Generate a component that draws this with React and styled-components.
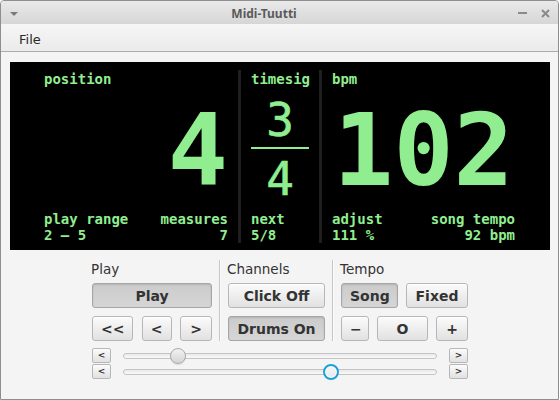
import React from "react";
import styled, { createGlobalStyle } from "styled-components";

const GREEN = "#90ee90";
const MONO = `"DejaVu Sans Mono", "Liberation Mono", monospace`;
const SANS = `"DejaVu Sans", "Liberation Sans", sans-serif`;

const GlobalStyle = createGlobalStyle`
  html, body {
    margin: 0;
    padding: 0;
    background: #ffffff;
  }
  * {
    box-sizing: border-box;
  }
`;

const App = () => {
  return (
    <>
      <GlobalStyle />
      <Window>
        <TitleBar>
          <TitleMenuArrow />
          <Title>Midi-Tuutti</Title>
          <TitleButtons>
            <Minimize />
            <svg width="9" height="9" viewBox="0 0 9 9">
              <path d="M1 1 L8 8 M8 1 L1 8" stroke="#8a8a8a" strokeWidth="2" />
            </svg>
          </TitleButtons>
        </TitleBar>

        <MenuBar>
          <MenuItem>File</MenuItem>
        </MenuBar>

        <Content>
          {/* 검은 디스플레이 패널 */}
          <Display>
            <Column $w={184}>
              <TopLabel>position</TopLabel>
              <BigNumber $align="flex-end">4</BigNumber>
              <Footer>
                <FooterCell>
                  <span>play range</span>
                  <span>2 — 5</span>
                </FooterCell>
                <FooterCell $right>
                  <span>measures</span>
                  <span>7</span>
                </FooterCell>
              </Footer>
            </Column>
            <PanelSep />
            <Column $w={58}>
              <TopLabel>timesig</TopLabel>
              <Fraction>
                <FracNum>3</FracNum>
                <FracBar />
                <FracNum>4</FracNum>
              </Fraction>
              <Footer>
                <FooterCell>
                  <span>next</span>
                  <span>5/8</span>
                </FooterCell>
              </Footer>
            </Column>
            <PanelSep />
            <Column $grow>
              <TopLabel>bpm</TopLabel>
              <BigNumber $align="center">102</BigNumber>
              <Footer>
                <FooterCell>
                  <span>adjust</span>
                  <span>111 %</span>
                </FooterCell>
                <FooterCell $right>
                  <span>song tempo</span>
                  <span>92 bpm</span>
                </FooterCell>
              </Footer>
            </Column>
          </Display>

          {/* 아래 컨트롤 */}
          <Controls>
            <SectionRow>
              <Section $w={120}>
                <GroupLabel>Play</GroupLabel>
                <Button $pressed>Play</Button>
                <NavRow>
                  <Button>&lt;&lt;</Button>
                  <Button>&lt;</Button>
                  <Button>&gt;</Button>
                </NavRow>
              </Section>
              <Divider />
              <Section $w={97}>
                <GroupLabel>Channels</GroupLabel>
                <Button>Click Off</Button>
                <Button $pressed>Drums On</Button>
              </Section>
              <Divider />
              <Section $w={127}>
                <GroupLabel>Tempo</GroupLabel>
                <ButtonRow>
                  <Button $pressed>Song</Button>
                  <Button>Fixed</Button>
                </ButtonRow>
                <TempoRow>
                  <Button>−</Button>
                  <Button>O</Button>
                  <Button>+</Button>
                </TempoRow>
              </Section>
            </SectionRow>

            <Sliders>
              <SliderRow value={0.155} />
              <SliderRow value={0.673} focused />
            </Sliders>
          </Controls>
        </Content>
      </Window>
    </>
  );
};

const SliderRow = ({ value, focused }) => (
  <SliderLine>
    <SmallButton>&lt;</SmallButton>
    <Track>
      <Thumb
        $focused={focused}
        style={{ left: `calc((100% - 16px) * ${value})` }}
      />
    </Track>
    <SmallButton>&gt;</SmallButton>
  </SliderLine>
);

export default App;

// 창 전체
const Window = styled.div`
  width: 559px;
  height: 400px;
  border: 1px solid #8e8e8e;
  border-radius: 4px 4px 0 0;
  overflow: hidden;
  display: flex;
  flex-direction: column;
  background: #f4f4f4;
`;

const TitleBar = styled.div`
  height: 23px;
  display: flex;
  align-items: center;
  padding: 1px 8px 0 9px;
  background: linear-gradient(#e9e9e9, #d6d6d6);
`;

const TitleMenuArrow = styled.div`
  width: 0;
  height: 0;
  border-left: 4px solid transparent;
  border-right: 4px solid transparent;
  border-top: 4px solid #7a7a7a;
  margin-top: 1px;
`;

const Title = styled.div`
  flex: 1;
  text-align: center;
  font: bold 12px "Noto Sans", ${SANS};
  color: #5a5a5a;
  padding-right: 8px;
`;

const TitleButtons = styled.div`
  display: flex;
  align-items: center;
  gap: 14px;
`;

const Minimize = styled.div`
  width: 9px;
  height: 2px;
  background: #8a8a8a;
`;

const MenuBar = styled.div`
  height: 28px;
  display: flex;
  align-items: center;
  padding: 3px 0 0 18px;
  background: linear-gradient(#f6f6f6, #ebebeb);
  border-bottom: 1px solid #acacac;
`;

const MenuItem = styled.span`
  font: 13px ${SANS};
  color: #2a2a2a;
`;

const Content = styled.div`
  flex: 1;
  padding-top: 10px;
`;

// 디스플레이
const Display = styled.div`
  width: 540px;
  height: 188px;
  margin-left: 9px;
  background: #000;
  display: flex;
  padding: 8px 35px 7px 34px;
`;

const Column = styled.div`
  display: flex;
  flex-direction: column;
  width: ${(p) => (p.$w ? `${p.$w}px` : "auto")};
  flex: ${(p) => (p.$grow ? 1 : "none")};
  font: bold 14px ${MONO};
  line-height: 16px;
  color: ${GREEN};
`;

const PanelSep = styled.div`
  width: 3px;
  flex: none;
  background: #1f1f1f;
  margin: 0 10px;
`;

const TopLabel = styled.div`
  margin-top: 1px;
  white-space: pre;
`;

const BigNumber = styled.div`
  flex: 1;
  display: flex;
  align-items: center;
  justify-content: ${(p) => p.$align};
  padding-top: 3px;
  font-size: 100px;
  line-height: 1;
`;

const Fraction = styled.div`
  flex: 1;
  display: flex;
  flex-direction: column;
  align-items: center;
  justify-content: center;
`;

const FracNum = styled.div`
  font-size: 46px;
  font-weight: normal;
  line-height: 1;
  -webkit-text-stroke: 0.6px ${GREEN};
`;

const FracBar = styled.div`
  width: 100%;
  height: 2px;
  background: ${GREEN};
  margin: 4px 0 7px;
`;

const Footer = styled.div`
  display: flex;
  justify-content: space-between;
  white-space: pre;
`;

const FooterCell = styled.div`
  display: flex;
  flex-direction: column;
  align-items: ${(p) => (p.$right ? "flex-end" : "flex-start")};
`;

// 컨트롤 영역
const Controls = styled.div`
  display: flex;
  flex-direction: column;
  align-items: center;
  padding-top: 10px;
  padding-left: 1px;
`;

const SectionRow = styled.div`
  display: flex;
  gap: 7px;
`;

const Section = styled.div`
  width: ${(p) => p.$w}px;
  display: flex;
  flex-direction: column;
  gap: 8px;
`;

const Divider = styled.div`
  width: 2px;
  border-left: 1px solid #c6c6c6;
  border-right: 1px solid #fbfbfb;
`;

const GroupLabel = styled.div`
  font: 13.5px ${SANS};
  line-height: 17px;
  color: #333;
  margin: 1px 0 -3px -1px;
`;

const Button = styled.button`
  height: 25px;
  padding: 0 8px;
  font: bold 14px ${SANS};
  color: #333;
  border: 1px solid ${(p) => (p.$pressed ? "#a6a6a6" : "#b7b7b7")};
  border-radius: 3px;
  background: ${(p) =>
    p.$pressed
      ? "linear-gradient(#cbcbcb, #d6d6d6)"
      : "linear-gradient(#fbfbfb, #e1e1e1)"};
  box-shadow: ${(p) =>
    p.$pressed
      ? "inset 0 1px 2px rgba(0,0,0,0.12)"
      : "inset 0 1px 0 rgba(255,255,255,0.8)"};
  white-space: nowrap;
  cursor: pointer;
`;

const NavRow = styled.div`
  display: grid;
  grid-template-columns: 41px 30px 32px;
  justify-content: space-between;
`;

const ButtonRow = styled.div`
  display: grid;
  grid-template-columns: 57px 1fr;
  gap: 8px;
`;

const TempoRow = styled.div`
  display: grid;
  grid-template-columns: 28px 1fr 32px;
  gap: 8px;
`;

// 슬라이더
const Sliders = styled.div`
  width: 376px;
  margin-top: 7px;
  display: flex;
  flex-direction: column;
  gap: 1px;
`;

const SliderLine = styled.div`
  display: grid;
  grid-template-columns: 19px 1fr 19px;
  column-gap: 12px;
  height: 15px;
  align-items: center;
`;

const SmallButton = styled.button`
  height: 15px;
  padding: 0;
  font: bold 9px ${SANS};
  color: #333;
  border: 1px solid #b7b7b7;
  border-radius: 2px;
  background: linear-gradient(#fbfbfb, #e1e1e1);
  line-height: 1;
`;

const Track = styled.div`
  position: relative;
  height: 6px;
  border: 1px solid #c4c4c4;
  border-radius: 3px;
  background: linear-gradient(#e8e8e8, #fafafa);
`;

const Thumb = styled.div`
  position: absolute;
  top: 50%;
  width: 16px;
  height: 16px;
  margin-top: -8px;
  border-radius: 50%;
  border: ${(p) => (p.$focused ? "2px solid #1ba1d8" : "1px solid #a9a9a9")};
  background: ${(p) =>
    p.$focused
      ? "linear-gradient(#f6f6f6, #e8e8e8)"
      : "linear-gradient(#f2f2f2, #d4d4d4)"};
  box-shadow: ${(p) =>
    p.$focused ? "inset 0 0 0 1px #ffffff" : "0 1px 1px rgba(0,0,0,0.1)"};
`;
